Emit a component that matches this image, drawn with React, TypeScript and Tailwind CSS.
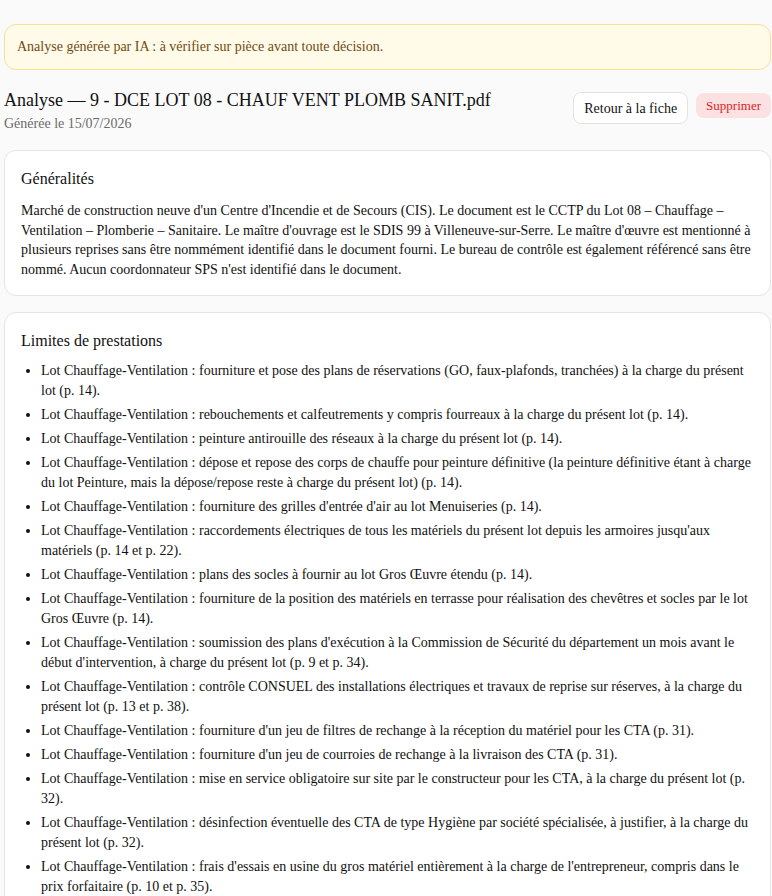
import React from 'react';

const limites: string[] = [
  "fourniture et pose des plans de réservations (GO, faux-plafonds, tranchées) à la charge du présent lot (p. 14).",
  "rebouchements et calfeutrements y compris fourreaux à la charge du présent lot (p. 14).",
  "peinture antirouille des réseaux à la charge du présent lot (p. 14).",
  "dépose et repose des corps de chauffe pour peinture définitive (la peinture définitive étant à charge du lot Peinture, mais la dépose/repose reste à charge du présent lot) (p. 14).",
  "fourniture des grilles d'entrée d'air au lot Menuiseries (p. 14).",
  "raccordements électriques de tous les matériels du présent lot depuis les armoires jusqu'aux matériels (p. 14 et p. 22).",
  "plans des socles à fournir au lot Gros Œuvre étendu (p. 14).",
  "fourniture de la position des matériels en terrasse pour réalisation des chevêtres et socles par le lot Gros Œuvre (p. 14).",
  "soumission des plans d'exécution à la Commission de Sécurité du département un mois avant le début d'intervention, à charge du présent lot (p. 9 et p. 34).",
  "contrôle CONSUEL des installations électriques et travaux de reprise sur réserves, à la charge du présent lot (p. 13 et p. 38).",
  "fourniture d'un jeu de filtres de rechange à la réception du matériel pour les CTA (p. 31).",
  "fourniture d'un jeu de courroies de rechange à la livraison des CTA (p. 31).",
  "mise en service obligatoire sur site par le constructeur pour les CTA, à la charge du présent lot (p. 32).",
  "désinfection éventuelle des CTA de type Hygiène par société spécialisée, à justifier, à la charge du présent lot (p. 32).",
  "frais d'essais en usine du gros matériel entièrement à la charge de l'entrepreneur, compris dans le prix forfaitaire (p. 10 et p. 35).",
];

const Section: React.FC<{ title: string; children: React.ReactNode }> = ({ title, children }) => (
  <section className="rounded-xl border border-[#e5e5e5] bg-white p-4">
    <h2 className="mb-2.5 text-[16px] leading-6 text-[#111]">{title}</h2>
    {children}
  </section>
);

export default function App() {
  return (
    <div className="min-h-screen bg-[#fafafa] pl-1 pr-px pt-6 pb-6 [font-family:'Liberation_Serif','Times_New_Roman',serif] text-[#111]">
      <div className="rounded-xl border border-[#f6df9f] bg-[#fffbe8] px-3 py-3 text-[14px] leading-5 text-[#6f4a12]">
        Analyse générée par IA : à vérifier sur pièce avant toute décision.
      </div>

      <div className="mt-4 flex items-start justify-between">
        <div>
          <h1 className="text-[18px] leading-7">Analyse — 9 - DCE LOT 08 - CHAUF VENT PLOMB SANIT.pdf</h1>
          <p className="text-[14px] leading-5 text-[#6b6b6b]">Générée le 15/07/2026</p>
        </div>
        <div className="mt-1.5 flex items-start gap-2">
          <button className="h-8 rounded-lg border border-[#e3e3e3] bg-white px-2.5 text-[14px] text-[#111]">
            Retour à la fiche
          </button>
          <button className="mt-px h-[25px] rounded-lg bg-[#fbe1e1] px-2.5 text-[13px] text-[#dc1f1f]">
            Supprimer
          </button>
        </div>
      </div>

      <div className="mt-4 flex flex-col gap-4">
        <Section title="Généralités">
          <p className="text-[14px] leading-[19.6px]">
            Marché de construction neuve d'un Centre d'Incendie et de Secours (CIS). Le document est le CCTP du Lot 08 – Chauffage – Ventilation – Plomberie – Sanitaire. Le maître d'ouvrage est le SDIS 99 à Villeneuve-sur-Serre. Le maître d'œuvre est mentionné à plusieurs reprises sans être nommément identifié dans le document fourni. Le bureau de contrôle est également référencé sans être nommé. Aucun coordonnateur SPS n'est identifié dans le document.
          </p>
        </Section>

        <Section title="Limites de prestations">
          <ul className="-mt-0.5 list-disc space-y-1 pl-5 text-[14px] leading-5">
            {limites.map((item, i) => (
              <li key={i}>Lot Chauffage-Ventilation : {item}</li>
            ))}
          </ul>
        </Section>
      </div>
    </div>
  );
}
